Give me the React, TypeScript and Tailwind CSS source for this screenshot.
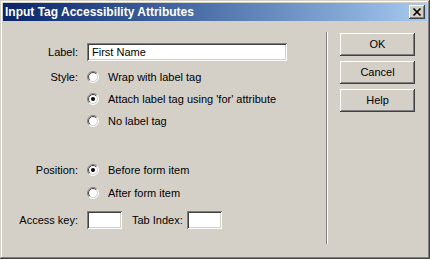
import React from "react";

const raised =
  "shadow-[inset_-1px_-1px_0_#404040,inset_1px_1px_0_#ffffff,inset_-2px_-2px_0_#808080,inset_2px_2px_0_#d4d0c8]";
const sunken =
  "shadow-[inset_1px_1px_0_#808080,inset_-1px_-1px_0_#ffffff,inset_2px_2px_0_#404040,inset_-2px_-2px_0_#d4d0c8]";

function Radio({ checked }: { checked?: boolean }) {
  const r1 = 5.5;
  const r2 = 4.5;
  const a = 0.7071;
  const arc = (r: number, first: boolean) => {
    const x1 = 6 - r * a;
    const y1 = 6 + r * a;
    const x2 = 6 + r * a;
    const y2 = 6 - r * a;
    return first
      ? `M ${x1} ${y1} A ${r} ${r} 0 0 1 ${x2} ${y2}`
      : `M ${x2} ${y2} A ${r} ${r} 0 0 1 ${x1} ${y1}`;
  };
  return (
    <svg width="12" height="12" viewBox="0 0 12 12" className="shrink-0">
      <circle cx="6" cy="6" r="5" fill="#ffffff" />
      <path d={arc(r1, true)} stroke="#808080" strokeWidth="1" fill="none" />
      <path d={arc(r1, false)} stroke="#ffffff" strokeWidth="1" fill="none" />
      <path d={arc(r2, true)} stroke="#404040" strokeWidth="1" fill="none" />
      <path d={arc(r2, false)} stroke="#d4d0c8" strokeWidth="1" fill="none" />
      {checked && <circle cx="6" cy="6" r="2" fill="#000000" />}
    </svg>
  );
}

function RadioRow({
  label,
  text,
  checked,
  className = "",
}: {
  label?: string;
  text: string;
  checked?: boolean;
  className?: string;
}) {
  return (
    <div className={`flex items-center h-[22px] ${className}`}>
      <div className="w-[75px] text-right">{label}</div>
      <div className="ml-[9px] flex items-center">
        <Radio checked={checked} />
        <span className="ml-[9px]">{text}</span>
      </div>
    </div>
  );
}

function Button({ children }: { children: React.ReactNode }) {
  return (
    <div
      className={`w-[75px] h-[23px] flex items-center justify-center bg-[#d4d0c8] ${raised}`}
    >
      {children}
    </div>
  );
}

export default function App() {
  return (
    <div
      className={`w-[430px] h-[259px] bg-[#d4d0c8] p-[3px] flex flex-col text-[11px] text-black font-['Liberation_Sans',Arial,sans-serif] shadow-[inset_-1px_-1px_0_#404040,inset_1px_1px_0_#d4d0c8,inset_-2px_-2px_0_#808080,inset_2px_2px_0_#ffffff]`}
    >
      <div className="h-[18px] flex items-center bg-linear-to-r from-[#0a246a] to-[#a6caf0] shrink-0">
        <span className="pl-[2px] text-white font-bold text-[12px] leading-none">
          Input Tag Accessibility Attributes
        </span>
        <div
          className={`ml-auto mr-[2px] w-[16px] h-[14px] bg-[#d4d0c8] flex items-center justify-center ${raised}`}
        >
          <svg width="16" height="14" viewBox="0 0 16 14">
            <path
              d="M4.5 3.5 L11.5 10.5 M11.5 3.5 L4.5 10.5"
              stroke="#000000"
              strokeWidth="1.7"
              fill="none"
            />
          </svg>
        </div>
      </div>
      <div className="flex flex-row flex-1">
        <div className="w-[323px] flex flex-col pt-[22px]">
          <div className="flex items-center h-[18px]">
            <div className="w-[75px] text-right">Label:</div>
            <div
              className={`ml-[9px] w-[200px] h-[18px] bg-white flex items-center pl-[5px] ${sunken}`}
            >
              First Name
            </div>
          </div>
          <RadioRow label="Style:" text="Wrap with label tag" className="mt-[5px]" />
          <RadioRow text="Attach label tag using 'for' attribute" checked />
          <RadioRow text="No label tag" />
          <RadioRow
            label="Position:"
            text="Before form item"
            checked
            className="mt-[27px]"
          />
          <RadioRow text="After form item" className="mt-[1px]" />
          <div className="flex items-center h-[18px] mt-[7px]">
            <div className="w-[75px] text-right">Access key:</div>
            <div className={`ml-[9px] w-[35px] h-[18px] bg-white ${sunken}`} />
            <span className="ml-[10px] w-[55px]">Tab Index:</span>
            <div className={`w-[35px] h-[18px] bg-white ${sunken}`} />
          </div>
        </div>
        <div className="mt-[11px] h-[212px] w-[2px] border-l border-l-[#808080] border-r border-r-white" />
        <div className="ml-[12px] pt-[12px] flex flex-col gap-[5px]">
          <Button>OK</Button>
          <Button>Cancel</Button>
          <Button>Help</Button>
        </div>
      </div>
    </div>
  );
}
